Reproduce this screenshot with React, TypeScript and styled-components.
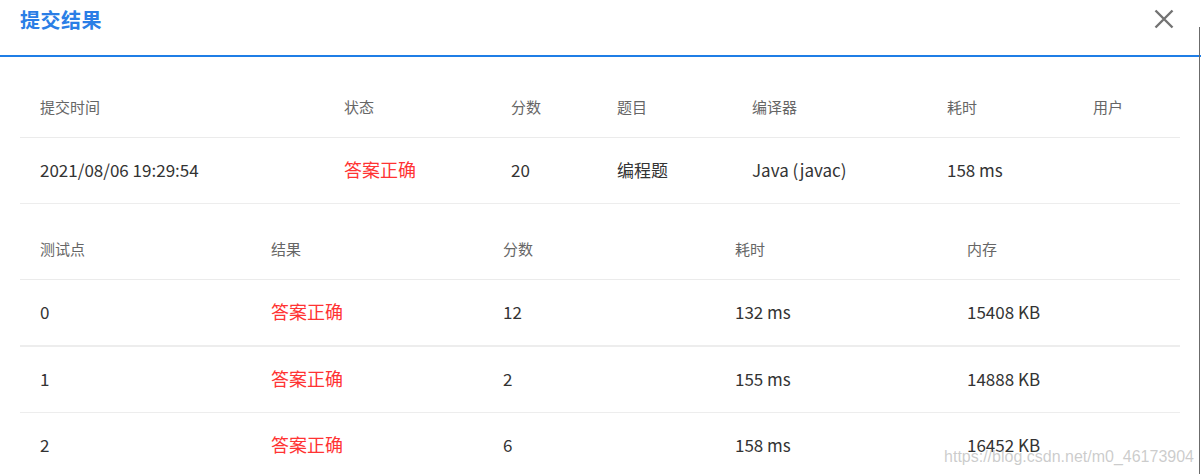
import React from "react";
import styled, { createGlobalStyle } from "styled-components";

const Global = createGlobalStyle`
  html, body { margin: 0; padding: 0; background: #fff; }
  body { font-family: "Noto Sans CJK SC", "Noto Sans", sans-serif; }
`;

const Dialog = styled.div`
  position: relative;
  width: 1201px;
  height: 474px;
  overflow: hidden;
  background: #fff;
  &::after {
    content: "";
    position: absolute;
    right: 1px;
    top: 27px;
    bottom: 0;
    width: 1px;
    background: #6b6b6b;
  }
`;

const Header = styled.div`
  height: 55px;
  display: flex;
  align-items: center;
  justify-content: space-between;
  padding: 0 27px 0 20px;
  border-bottom: 2px solid #1f7ee6;
`;

const Title = styled.h2`
  margin: 0 0 15px 0;
  font-size: 20px;
  font-weight: 700;
  color: #2a7ee6;
  line-height: 1;
  letter-spacing: 0.5px;
`;

const Close = styled.button`
  border: 0;
  background: none;
  padding: 0;
  margin-bottom: 17px;
  width: 21px;
  height: 21px;
  display: flex;
  align-items: center;
  justify-content: center;
  cursor: pointer;
`;

const Body = styled.div`
  padding: 20px 21px 0 20px;
`;

const Grid = styled.div<{ $cols: string }>`
  display: grid;
  grid-template-columns: ${(p) => p.$cols};
`;

const HeadCell = styled.div`
  height: 59px;
  display: flex;
  align-items: center;
  padding-left: 20px;
  padding-bottom: 1px;
  font-size: 15px;
  color: #666;
  border-bottom: 1px solid #ebebeb;
`;

const Cell = styled.div<{ $red?: boolean; $thick?: boolean }>`
  height: 62px;
  display: flex;
  align-items: center;
  padding-left: 20px;
  padding-bottom: 3px;
  font-size: ${(p) => (p.$red ? 18 : 17)}px;
  color: ${(p) => (p.$red ? "#ff3333" : "#333")};
  border-bottom: ${(p) => (p.$thick ? 2 : 1)}px solid #ededed;
`;

const Spacer = styled.div`
  height: 15px;
`;

const Watermark = styled.div`
  position: absolute;
  right: 7px;
  bottom: 8px;
  font-family: "Liberation Sans", Arial, sans-serif;
  font-size: 16px;
  color: rgba(170, 170, 170, 0.6);
  pointer-events: none;
`;

const cols1 = "304px 167px 106px 135px 195px 146px 1fr";
const cols2 = "231px 232px 232px 232px 1fr";

const head1 = ["提交时间", "状态", "分数", "题目", "编译器", "耗时", "用户"];
const head2 = ["测试点", "结果", "分数", "耗时", "内存"];
const rows2 = [
  ["0", "答案正确", "12", "132 ms", "15408 KB"],
  ["1", "答案正确", "2", "155 ms", "14888 KB"],
  ["2", "答案正确", "6", "158 ms", "16452 KB"],
];

export default function App() {
  return (
    <>
      <Global />
      <Dialog>
        <Header>
          <Title>提交结果</Title>
          <Close aria-label="close">
            <svg width="20" height="20" viewBox="0 0 20 20">
              <path d="M1.5 1.5 L18.5 18.5 M18.5 1.5 L1.5 18.5" stroke="#737373" strokeWidth="2.4" />
            </svg>
          </Close>
        </Header>
        <Body>
          <Grid $cols={cols1}>
            {head1.map((h) => (
              <HeadCell key={h}>{h}</HeadCell>
            ))}
            <Cell>2021/08/06 19:29:54</Cell>
            <Cell $red>答案正确</Cell>
            <Cell>20</Cell>
            <Cell>编程题</Cell>
            <Cell>Java (javac)</Cell>
            <Cell>158 ms</Cell>
            <Cell></Cell>
          </Grid>
          <Spacer />
          <Grid $cols={cols2}>
            {head2.map((h) => (
              <HeadCell key={h}>{h}</HeadCell>
            ))}
            {rows2.map((r, i) =>
              r.map((v, j) => (
                <Cell key={`${i}-${j}`} $red={j === 1} $thick={i === 0}>
                  {v}
                </Cell>
              ))
            )}
          </Grid>
        </Body>
        <Watermark>https://blog.csdn.net/m0_46173904</Watermark>
      </Dialog>
    </>
  );
}
